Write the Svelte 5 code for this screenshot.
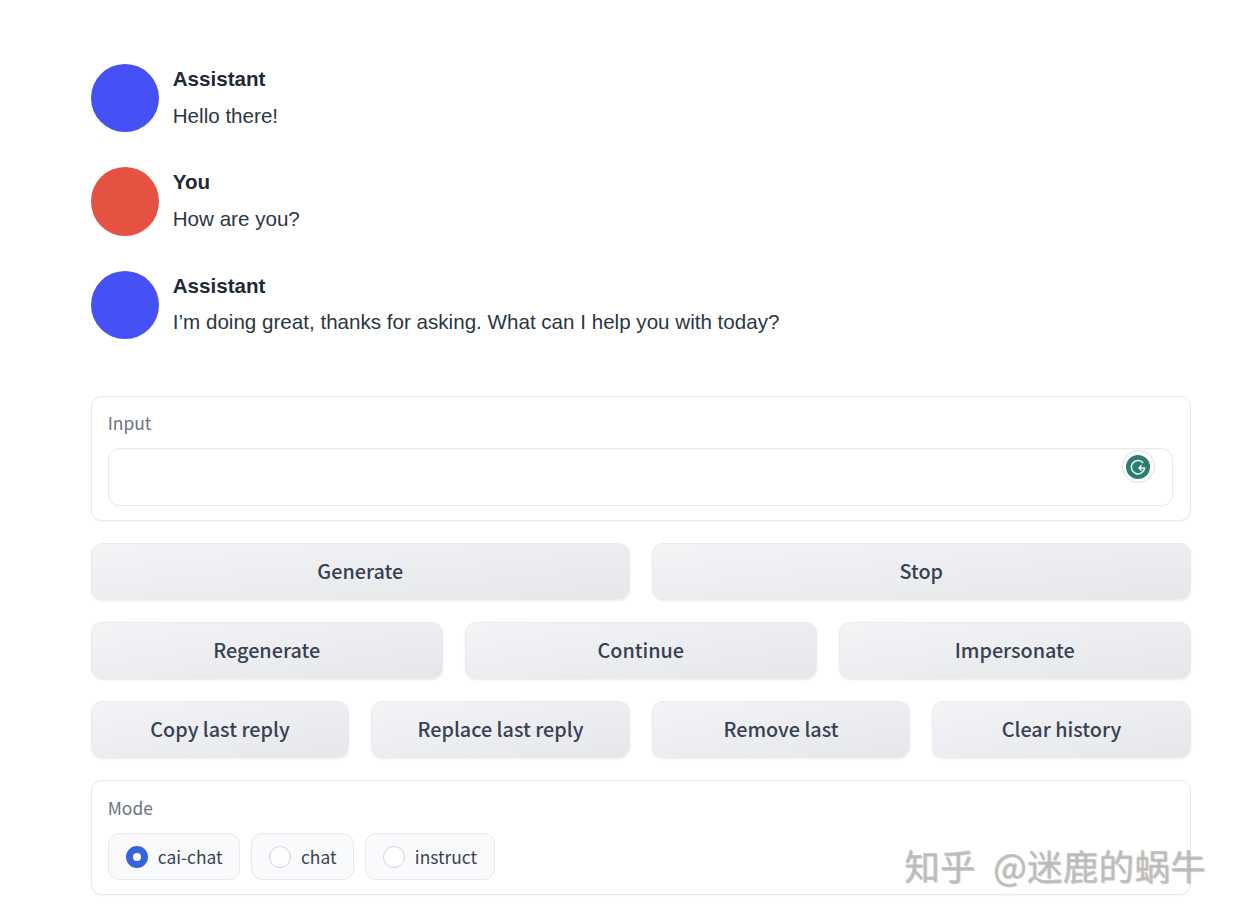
<script>
  const messages = [
    { name: 'Assistant', text: 'Hello there!', kind: 'bot' },
    { name: 'You', text: 'How are you?', kind: 'user' },
    { name: 'Assistant', text: 'I’m doing great, thanks for asking. What can I help you with today?', kind: 'bot' }
  ];
  const rows = [
    ['Generate', 'Stop'],
    ['Regenerate', 'Continue', 'Impersonate'],
    ['Copy last reply', 'Replace last reply', 'Remove last', 'Clear history']
  ];
  const modes = ['cai-chat', 'chat', 'instruct'];
  let mode = $state('cai-chat');
</script>

<main class="page">
  <section class="chat">
    {#each messages as m}
      <div class="msg">
        <div class="avatar {m.kind}"></div>
        <div class="body">
          <div class="name">{m.name}</div>
          <div class="text">{m.text}</div>
        </div>
      </div>
    {/each}
  </section>

  <section class="panel input-panel">
    <div class="label">Input</div>
    <div class="field">
      <textarea class="area" aria-label="Input"></textarea>
      <div class="grammarly">
        <svg viewBox="0 0 24 24" width="24" height="24" aria-hidden="true">
          <circle cx="12" cy="12" r="12" fill="#2a7d6f" />
          <path d="M17.2 7.9A6.7 6.7 0 1 0 18.7 12.9h-5.6M15.6 10.2l-2.6 2.7 2.6 2.7" fill="none" stroke="#e4f3ef" stroke-width="1.5" />
        </svg>
      </div>
    </div>
  </section>

  {#each rows as row}
    <div class="btn-row" style="--cols:{row.length}">
      {#each row as label}
        <button class="btn">{label}</button>
      {/each}
    </div>
  {/each}

  <section class="panel mode-panel">
    <div class="label">Mode</div>
    <div class="radios">
      {#each modes as m}
        <label class="radio">
          <input type="radio" name="mode" value={m} bind:group={mode} />
          <span>{m}</span>
        </label>
      {/each}
    </div>
  </section>

  <div class="watermark">知乎 @迷鹿的蜗牛</div>
</main>

<style>
  :global(body) {
    margin: 0;
    background: #fff;
  }
  .page {
    position: relative;
    box-sizing: border-box;
    width: 1239px;
    height: 915px;
    overflow: hidden;
    padding: 64px 48.25px 0 90.75px;
    font-family: "Noto Sans CJK SC", "Noto Sans", sans-serif;
  }
  .chat {
    display: flex;
    flex-direction: column;
    gap: 35px;
    height: 332px;
  }
  .msg {
    display: flex;
    gap: 14px;
    height: 68.4px;
  }
  .avatar {
    width: 68px;
    height: 68.4px;
    border-radius: 50%;
    flex: none;
  }
  .bot { background: #4550f5; }
  .user { background: #e65241; }
  .body {
    font-family: "Liberation Sans", Arial, sans-serif;
    font-size: 20.6px;
    color: #1f2937;
    line-height: 30px;
  }
  .name {
    font-weight: 700;
    margin-bottom: 6.6px;
  }
  .text {
    color: #2c3644;
  }
  .panel {
    box-sizing: border-box;
    border: 1px solid #e7e9ed;
    border-radius: 11px;
    box-shadow: 0 1px 2px rgba(0, 0, 0, 0.04);
    padding: 13px 17px 14px 16px;
    background: #fff;
  }
  .input-panel {
    height: 125px;
    margin-bottom: 22px;
  }
  .label {
    font-size: 17.4px;
    line-height: 26px;
    color: #6b7280;
    margin-bottom: 12px;
  }
  .field {
    position: relative;
    height: 58px;
  }
  .area {
    display: block;
    box-sizing: border-box;
    width: 100%;
    height: 100%;
    border: 1px solid #e7e9ed;
    border-radius: 11px;
    background: #fff;
    box-shadow: inset 0 1px 2px rgba(0, 0, 0, 0.03);
    resize: none;
    outline: none;
  }
  .grammarly {
    position: absolute;
    top: 2px;
    right: 18px;
    width: 24px;
    height: 24px;
    padding: 3.5px;
    border: 1px solid #d9dfe2;
    border-radius: 50%;
    background: #fff;
  }
  .grammarly svg {
    display: block;
  }
  .btn-row {
    display: grid;
    grid-template-columns: repeat(var(--cols), 1fr);
    gap: 22px;
    margin-bottom: 22px;
  }
  .btn {
    height: 57px;
    border: 1px solid #e9ebef;
    border-radius: 11px;
    background: linear-gradient(to bottom right, #f3f4f6, #e5e7eb);
    box-shadow: 0 1px 2px rgba(0, 0, 0, 0.08);
    color: #374151;
    font-family: inherit;
    font-size: 19.8px;
    font-weight: 500;
    padding: 0 0 2px;
  }
  .mode-panel {
    height: 115px;
    padding-top: 14px;
  }
  .radios {
    display: flex;
    gap: 11px;
    margin-top: 0;
  }
  .radio {
    box-sizing: border-box;
    height: 47px;
    display: flex;
    align-items: center;
    gap: 10px;
    padding: 0 16.4px 0 17px;
    border: 1px solid #e7e9ed;
    border-radius: 11px;
    background: #f9fafb;
    font-size: 17.4px;
    color: #374151;
  }
  .radio input {
    appearance: none;
    box-sizing: border-box;
    width: 22px;
    height: 22px;
    margin: 0;
    border: 1px solid #d1d5db;
    border-radius: 50%;
    background: #fff;
  }
  .radio input:checked {
    border: 7px solid #3763dd;
    background: #fff;
  }
  .watermark {
    position: absolute;
    left: 904px;
    top: 842px;
    font-size: 35.5px;
    font-weight: 400;
    line-height: 46px;
    letter-spacing: 0.3px;
    word-spacing: 9px;
    white-space: nowrap;
    color: rgba(185, 185, 185, 0.8);
    text-shadow: 1px 1px 1px rgba(120, 120, 120, 0.45), -1px -1px 0 rgba(255, 255, 255, 0.9);
  }
</style>
